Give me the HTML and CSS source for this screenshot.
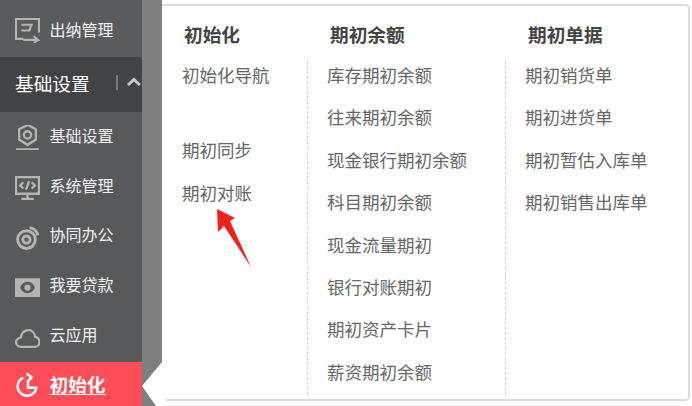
FILE: index.html
```html
<!DOCTYPE html>
<html lang="zh">
<head>
<meta charset="utf-8">
<title>初始化</title>
<link rel="stylesheet" href="styles.css">
</head>
<body>
<div class="app">
  <nav class="sidebar">
    <a class="item first">
      <svg class="ico" viewBox="0 0 24 24"><path d="M23 14V1H1v19h7M6 6.500h11M6 12h8l1.500-5.500M8 21h14l-4-3.500M22 21l-4 3"/></svg>
      <span>出纳管理</span>
    </a>
    <div class="group"><span class="group-name">基础设置</span><i class="sep"></i>
      <svg class="chev" viewBox="0 0 16 10"><path d="M2 8l6-5.500L14 8"/></svg>
    </div>
    <a class="item">
      <svg class="ico thick" viewBox="0 0 24 24"><path d="M12 0l8 4v10l-8 5-8-5V4zM1 23.500h22"/><circle cx="12" cy="9.500" r="3.500"/></svg>
      <span>基础设置</span>
    </a>
    <a class="item">
      <svg class="ico thick" viewBox="0 0 24 24"><path d="M1 2h22v16H1zM12 18v4M6 23h12M8 7l-3 3 3 3M16 7l3 3-3 3M13.500 6l-3 8"/></svg>
      <span>系统管理</span>
    </a>
    <a class="item up">
      <svg class="ico ring" viewBox="0 0 24 24"><circle cx="11" cy="14" r="8.500"/><circle cx="11" cy="14" r="3.500"/><path d="M14 2.500c4 .5 7 3.500 8 7.500"/></svg>
      <span>协同办公</span>
    </a>
    <a class="item up">
      <svg class="ico" viewBox="0 0 24 24"><path class="solid" fill-rule="evenodd" d="M0 3h24v18H0zM12 6.500C8.500 6.500 6 9 5 12c1 3 3.500 5.500 7 5.500s6-2.500 7-5.500c-1-3-3.500-5.500-7-5.500z"/><circle class="solid" cx="12" cy="12" r="3"/></svg>
      <span>我要贷款</span>
    </a>
    <a class="item up">
      <svg class="ico thick" viewBox="0 0 24 24"><path d="M6 21c-3 0-5-2-5-4.500S3 12.500 5.500 12C6.500 7.500 9.500 5 13 5c3.500 0 6 3 6.500 6.500 2.500.5 4 2.500 4 5S21.500 21 19 21z"/></svg>
      <span>云应用</span>
    </a>
    <a class="item active">
      <svg class="ico white" viewBox="0 0 24 24"><path d="M8 5.500A9 9 0 1 0 20.500 15H12.500V8M11 1.500l5 3.500-4 4.500"/></svg>
      <span>初始化</span>
    </a>
  </nav>
  <div class="strip"></div>
  <section class="panel">
    <div class="col col-a">
      <h3>初始化</h3>
      <ul class="list">
        <li>初始化导航</li>
        <li class="gap">期初同步</li>
        <li>期初对账</li>
      </ul>
    </div>
    <div class="col col-b">
      <h3>期初余额</h3>
      <ul class="list dashed">
        <li>库存期初余额</li>
        <li>往来期初余额</li>
        <li>现金银行期初余额</li>
        <li>科目期初余额</li>
        <li>现金流量期初</li>
        <li>银行对账期初</li>
        <li>期初资产卡片</li>
        <li>薪资期初余额</li>
      </ul>
    </div>
    <div class="col col-c">
      <h3>期初单据</h3>
      <ul class="list dashed">
        <li>期初销货单</li>
        <li>期初进货单</li>
        <li>期初暂估入库单</li>
        <li>期初销售出库单</li>
      </ul>
    </div>
  </section>
  <svg class="notch" viewBox="0 0 24 44"><path class="notch-w" d="M20 0L0 24l14 20h10V0z"/></svg>
  <svg class="arrow" viewBox="0 0 36 60"><path d="M1 0l18 9-5 3 21 46L8 17l-6 6z"/></svg>
</div>
</body>
</html>
```
FILE: styles.css
```css
* { box-sizing: border-box; }
html, body { margin: 0; padding: 0; }
body {
  width: 692px;
  height: 406px;
  overflow: hidden;
  background: #fff;
  font-family: "Noto Sans CJK SC", "Noto Sans", sans-serif;
}
.app {
  position: relative;
  display: flex;
  width: 692px;
  height: 406px;
  overflow: hidden;
}
.sidebar {
  width: 142px;
  flex: none;
  display: flex;
  flex-direction: column;
  background: #58595b;
  color: #f0f0f0;
}
.item {
  height: 50px;
  flex: none;
  display: flex;
  align-items: center;
  gap: 10px;
  padding-left: 15px;
  font-size: 16px;
  line-height: 20px;
}
.item span { position: relative; top: -2px; left: -0.5px; }
.item.up span { top: -3px; }
.first { height: 57px; padding-top: 4px; background: #5a5b5d; }
.group {
  height: 55px;
  flex: none;
  display: flex;
  align-items: center;
  padding: 0 0 5px 15px;
  background: #424344;
  color: #fff;
  font-size: 18.7px;
}
.group-name { width: 102px; }
.sep { width: 2px; height: 15px; background: #77787a; }
.chev {
  width: 16px;
  height: 10px;
  margin-left: 8px;
  fill: none;
  stroke: #c8c8c8;
  stroke-width: 3;
}
.ico {
  width: 25px;
  height: 25px;
  flex: none;
  fill: none;
  stroke: #b4b4b2;
  stroke-width: 2;
}
.ico.thick { stroke-width: 2.200; }
.ico.ring { stroke-width: 2.800; }
.ico .solid { fill: #b4b4b2; stroke: none; }
.ico.white { stroke: #fff; stroke-width: 2.400; }
.active {
  height: 44px;
  background: #ff4d58;
  color: #fff;
  font-weight: 700;
  font-size: 18.700px;
}
.active span { top: 0; text-decoration: underline; text-underline-offset: 2px; }
.strip {
  width: 20px;
  flex: none;
  background: #7f7f7f;
}
.panel {
  flex: none;
  width: 528px;
  height: 397px;
  margin-top: 4px;
  display: flex;
  background: #fff;
  border-top: 2px solid #dcdcdc;
  border-right: 2px solid #dcdcdc;
  border-bottom: 2px solid #dcdcdc;
  border-top-right-radius: 5px;
  border-bottom-right-radius: 5px;
  padding-top: 14px;
  color: #666;
}
.col h3 {
  margin: 0 0 6px;
  font-size: 18.700px;
  line-height: 28px;
  font-weight: 700;
  color: #444;
}
.col-a { width: 145px; padding-left: 20px; }
.col-b { width: 198px; }
.col-c { width: 160px; }
.col-b h3, .col-c h3 { padding-left: 23px; margin-bottom: 13px; }
.col-a h3 { padding-left: 2px; }
.list {
  list-style: none;
  margin: 0;
  padding: 0;
  font-size: 17.500px;
  line-height: 42.400px;
}
.list.dashed {
  display: flow-root;
  padding-left: 19px;
  height: 334px;
  border-left: 1px dashed #d0d0d0;
}
.list.dashed li:first-child { margin-top: -7px; }
.gap { margin-top: 33px; }
.notch {
  position: absolute;
  left: 142px;
  top: 362px;
  width: 24px;
  height: 44px;
}
.notch-w { fill: #fff; }
.arrow {
  position: absolute;
  left: 216px;
  top: 209px;
  width: 36px;
  height: 60px;
  fill: #f5221b;
}
```
